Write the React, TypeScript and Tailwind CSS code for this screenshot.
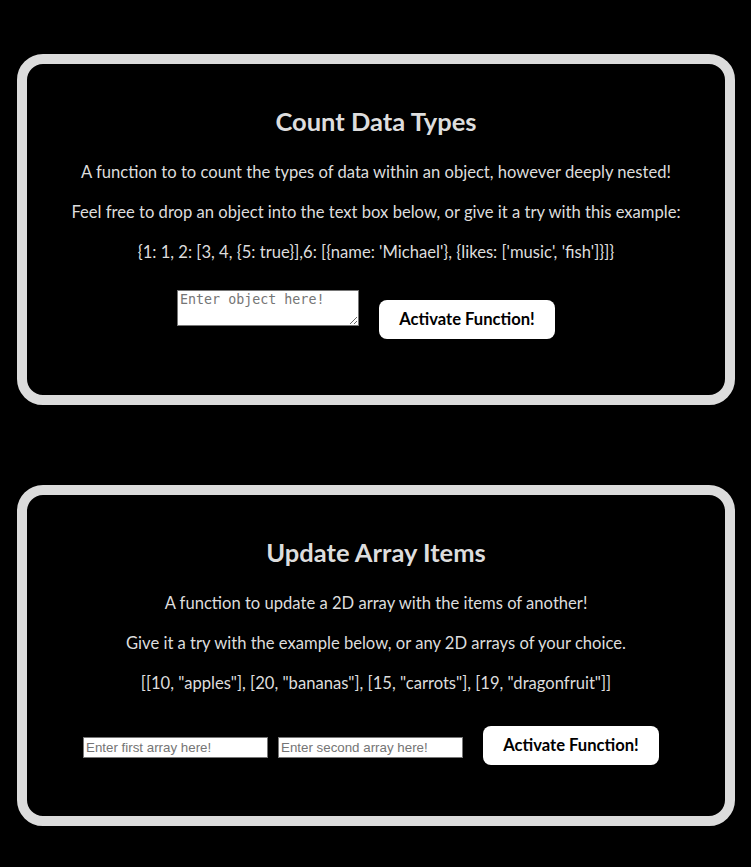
import { useState } from "react";

const font = "font-['Lato','Liberation_Sans',sans-serif]";

export default function App() {
  const [objectText, setObjectText] = useState("");
  const [firstArray, setFirstArray] = useState("");
  const [secondArray, setSecondArray] = useState("");

  return (
    <div className={`min-h-[867px] bg-black pt-[54px] pb-[41px] text-[#dddddd] ${font}`}>
      {/* Count Data Types */}
      <section className="mx-[17px] mr-[16px] h-[351px] rounded-[26px] border-[10px] border-[#dcdcdc] bg-black">
        <div className="flex flex-col items-center pt-[44px]">
          <h2 className="text-[25.5px] font-bold leading-[26px]">Count Data Types</h2>
          <p className="mt-[26px] text-[16.6px] leading-[24px]">
            A function to to count the types of data within an object, however deeply nested!
          </p>
          <p className="mt-[16px] text-[16.6px] leading-[24px]">
            Feel free to drop an object into the text box below, or give it a try with this example:
          </p>
          <p className="mt-[16px] text-[16.6px] leading-[24px]">
            {"{1: 1, 2: [3, 4, {5: true}],6: [{name: 'Michael'}, {likes: ['music', 'fish']}]}"}
          </p>
          <div className="flex items-start pr-[20px]">
            <textarea
              className="mt-[26px] h-[36px] w-[182px] border border-[#767676] bg-white px-[2px] py-[1px] font-['DejaVu_Sans_Mono',monospace] text-[13.33px] leading-[16px] text-black placeholder:text-[#757575]"
              placeholder="Enter object here!"
              value={objectText}
              onChange={(event) => setObjectText(event.target.value)}
            />
            <button className="ml-[20px] mt-[36px] h-[39px] w-[176px] rounded-[8px] bg-white text-[16.6px] font-bold text-black">
              Activate Function!
            </button>
          </div>
        </div>
      </section>

      {/* Update Array Items */}
      <section className="mt-[80px] ml-[17px] mr-[16px] h-[341px] rounded-[26px] border-[10px] border-[#dcdcdc] bg-black">
        <div className="flex flex-col items-center pt-[44px]">
          <h2 className="text-[25.5px] font-bold leading-[26px]">Update Array Items</h2>
          <p className="mt-[26px] text-[16.6px] leading-[24px]">
            A function to update a 2D array with the items of another!
          </p>
          <p className="mt-[16px] text-[16.6px] leading-[24px]">
            Give it a try with the example below, or any 2D arrays of your choice.
          </p>
          <p className="mt-[16px] text-[16.6px] leading-[24px]">
            {'[[10, "apples"], [20, "bananas"], [15, "carrots"], [19, "dragonfruit"]]'}
          </p>
          <div className="flex items-start pr-[10px]">
            <input
              className="mt-[42px] h-[21px] w-[185px] border border-[#767676] bg-white px-[2px] font-['Liberation_Sans',sans-serif] text-[13.33px] text-black placeholder:text-[#757575]"
              placeholder="Enter first array here!"
              value={firstArray}
              onChange={(event) => setFirstArray(event.target.value)}
            />
            <input
              className="ml-[10px] mt-[42px] h-[21px] w-[185px] border border-[#767676] bg-white px-[2px] font-['Liberation_Sans',sans-serif] text-[13.33px] text-black placeholder:text-[#757575]"
              placeholder="Enter second array here!"
              value={secondArray}
              onChange={(event) => setSecondArray(event.target.value)}
            />
            <button className="ml-[20px] mt-[31px] h-[39px] w-[176px] rounded-[8px] bg-white text-[16.6px] font-bold text-black">
              Activate Function!
            </button>
          </div>
        </div>
      </section>
    </div>
  );
}
